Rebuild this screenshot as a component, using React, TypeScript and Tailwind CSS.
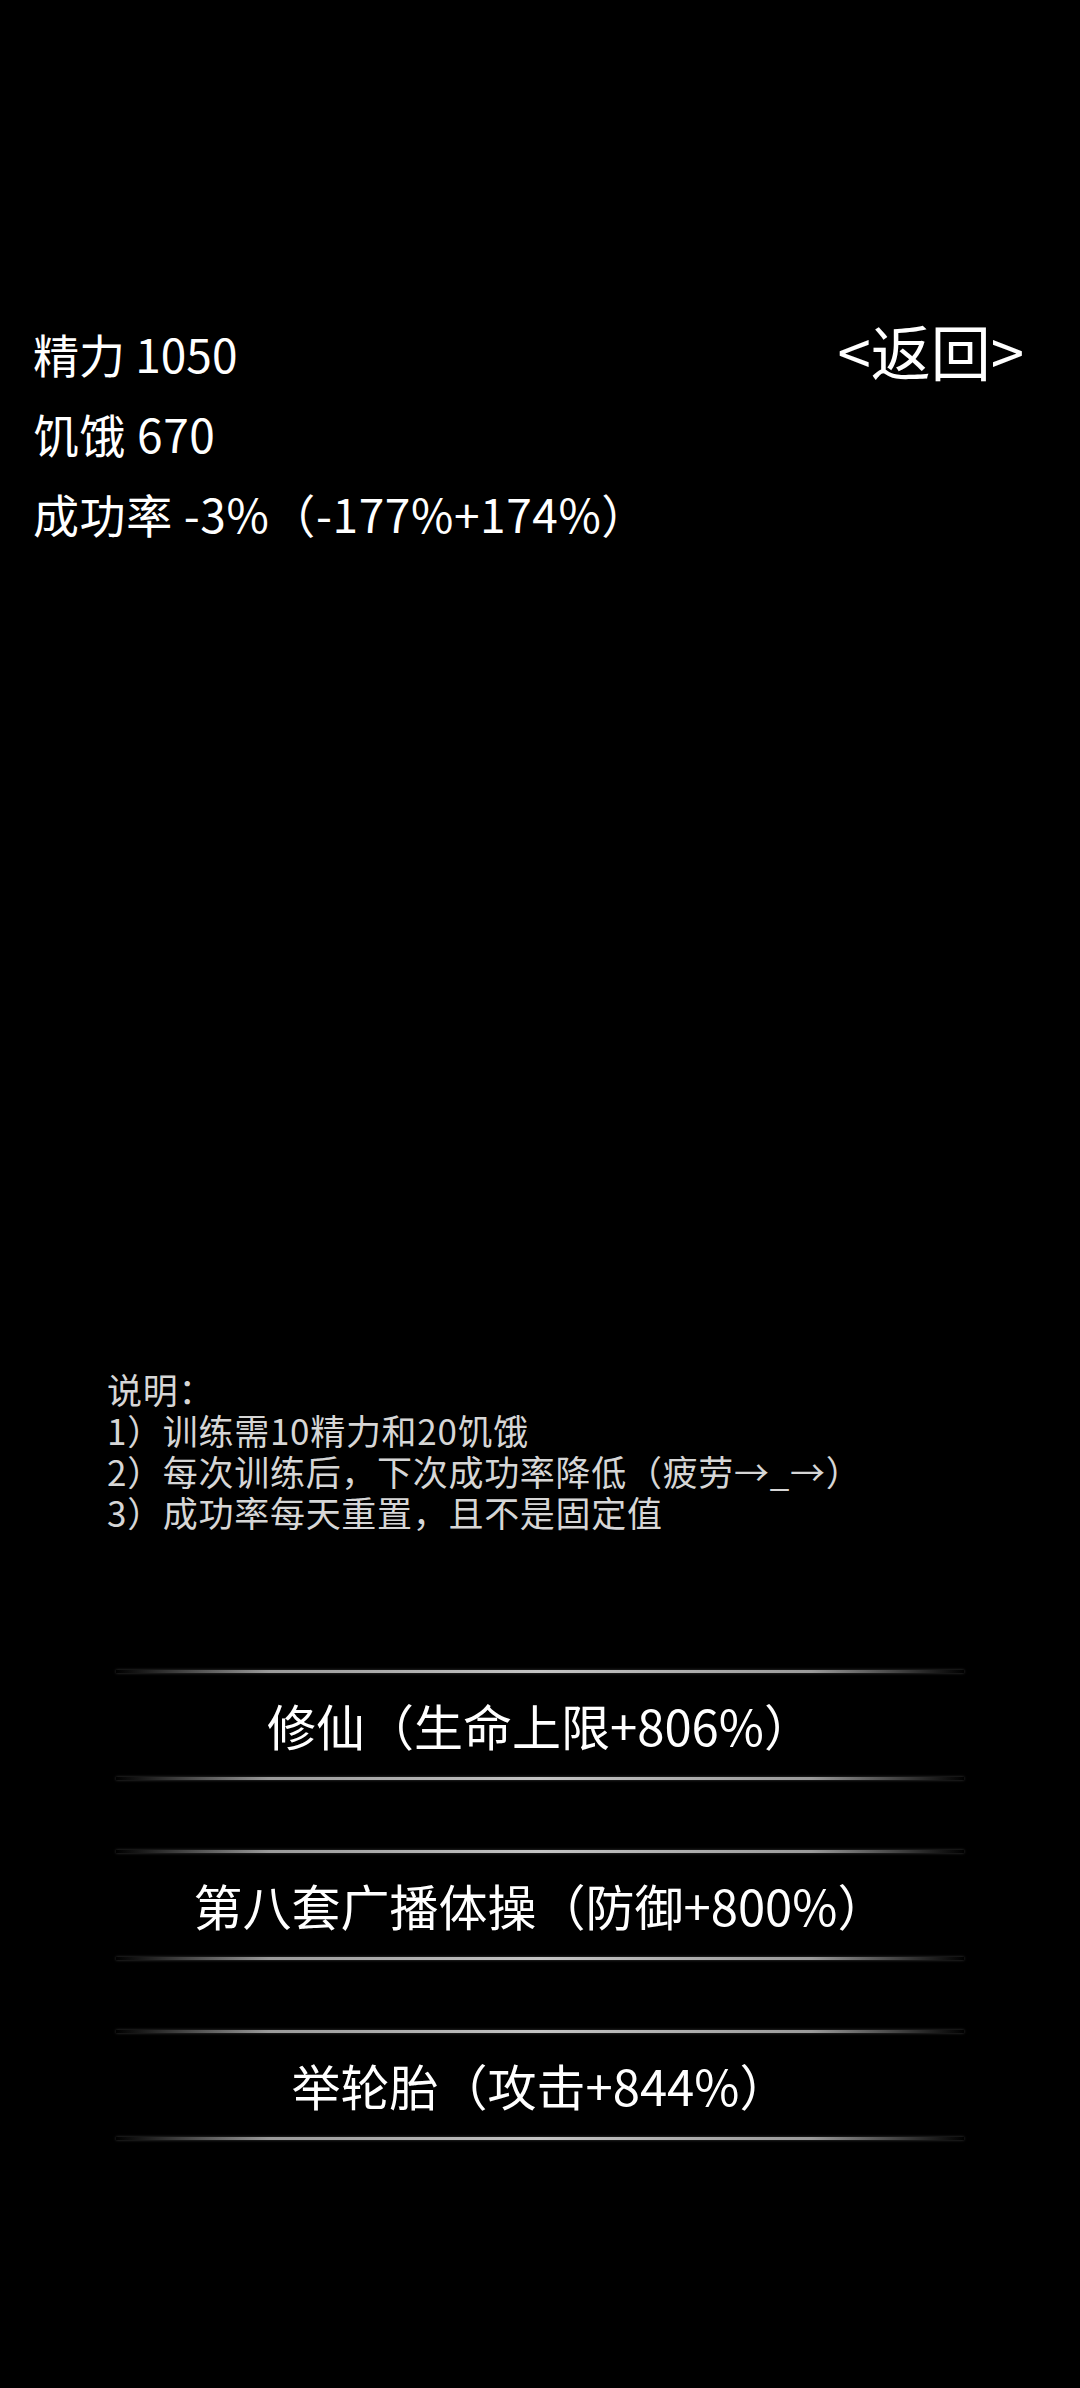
import React from "react";

const stats = [
  { label: "精力 1050" },
  { label: "饥饿 670" },
  { label: "成功率 -3%（-177%+174%）" },
];

const notes = [
  "说明：",
  "1）训练需10精力和20饥饿",
  "2）每次训练后，下次成功率降低（疲劳→_→）",
  "3）成功率每天重置，且不是固定值",
];

const trainings = [
  "修仙（生命上限+806%）",
  "第八套广播体操（防御+800%）",
  "举轮胎（攻击+844%）",
];

function GlowLine() {
  return (
    <div className="h-[3px] w-full bg-[linear-gradient(to_right,transparent,#9a9a9a_18%,#c4c4c4_50%,#9a9a9a_82%,transparent)] shadow-[0_0_3px_rgba(255,255,255,0.25)]" />
  );
}

export default function App() {
  return (
    <div className="min-h-[2388px] w-full bg-black text-white font-['Noto_Sans_CJK_SC','Noto_Sans',sans-serif]">
      <div className="pt-[313px] pl-[33px] pr-[56px]">
        <div className="flex items-center justify-between">
          <div className="text-[46px] leading-[80px]">{stats[0].label}</div>
          <button className="text-[60px] leading-[80px] -mt-[6px]">&lt;返回&gt;</button>
        </div>
        {stats.slice(1).map((s) => (
          <div key={s.label} className="text-[46px] leading-[80px] tracking-[0.6px]">
            {s.label}
          </div>
        ))}
      </div>

      <div className="mt-[815px] pl-[107px] text-[35px] leading-[41px] tracking-[0.7px] text-[#d6d6d6]">
        {notes.map((n) => (
          <div key={n}>{n}</div>
        ))}
      </div>

      <div className="mt-[138px] flex flex-col gap-[70px] px-[116px]">
        {trainings.map((t) => (
          <button key={t} className="flex w-full flex-col">
            <GlowLine />
            <div className="flex h-[104px] items-center justify-center text-[49px] text-white">
              {t}
            </div>
            <GlowLine />
          </button>
        ))}
      </div>
    </div>
  );
}
